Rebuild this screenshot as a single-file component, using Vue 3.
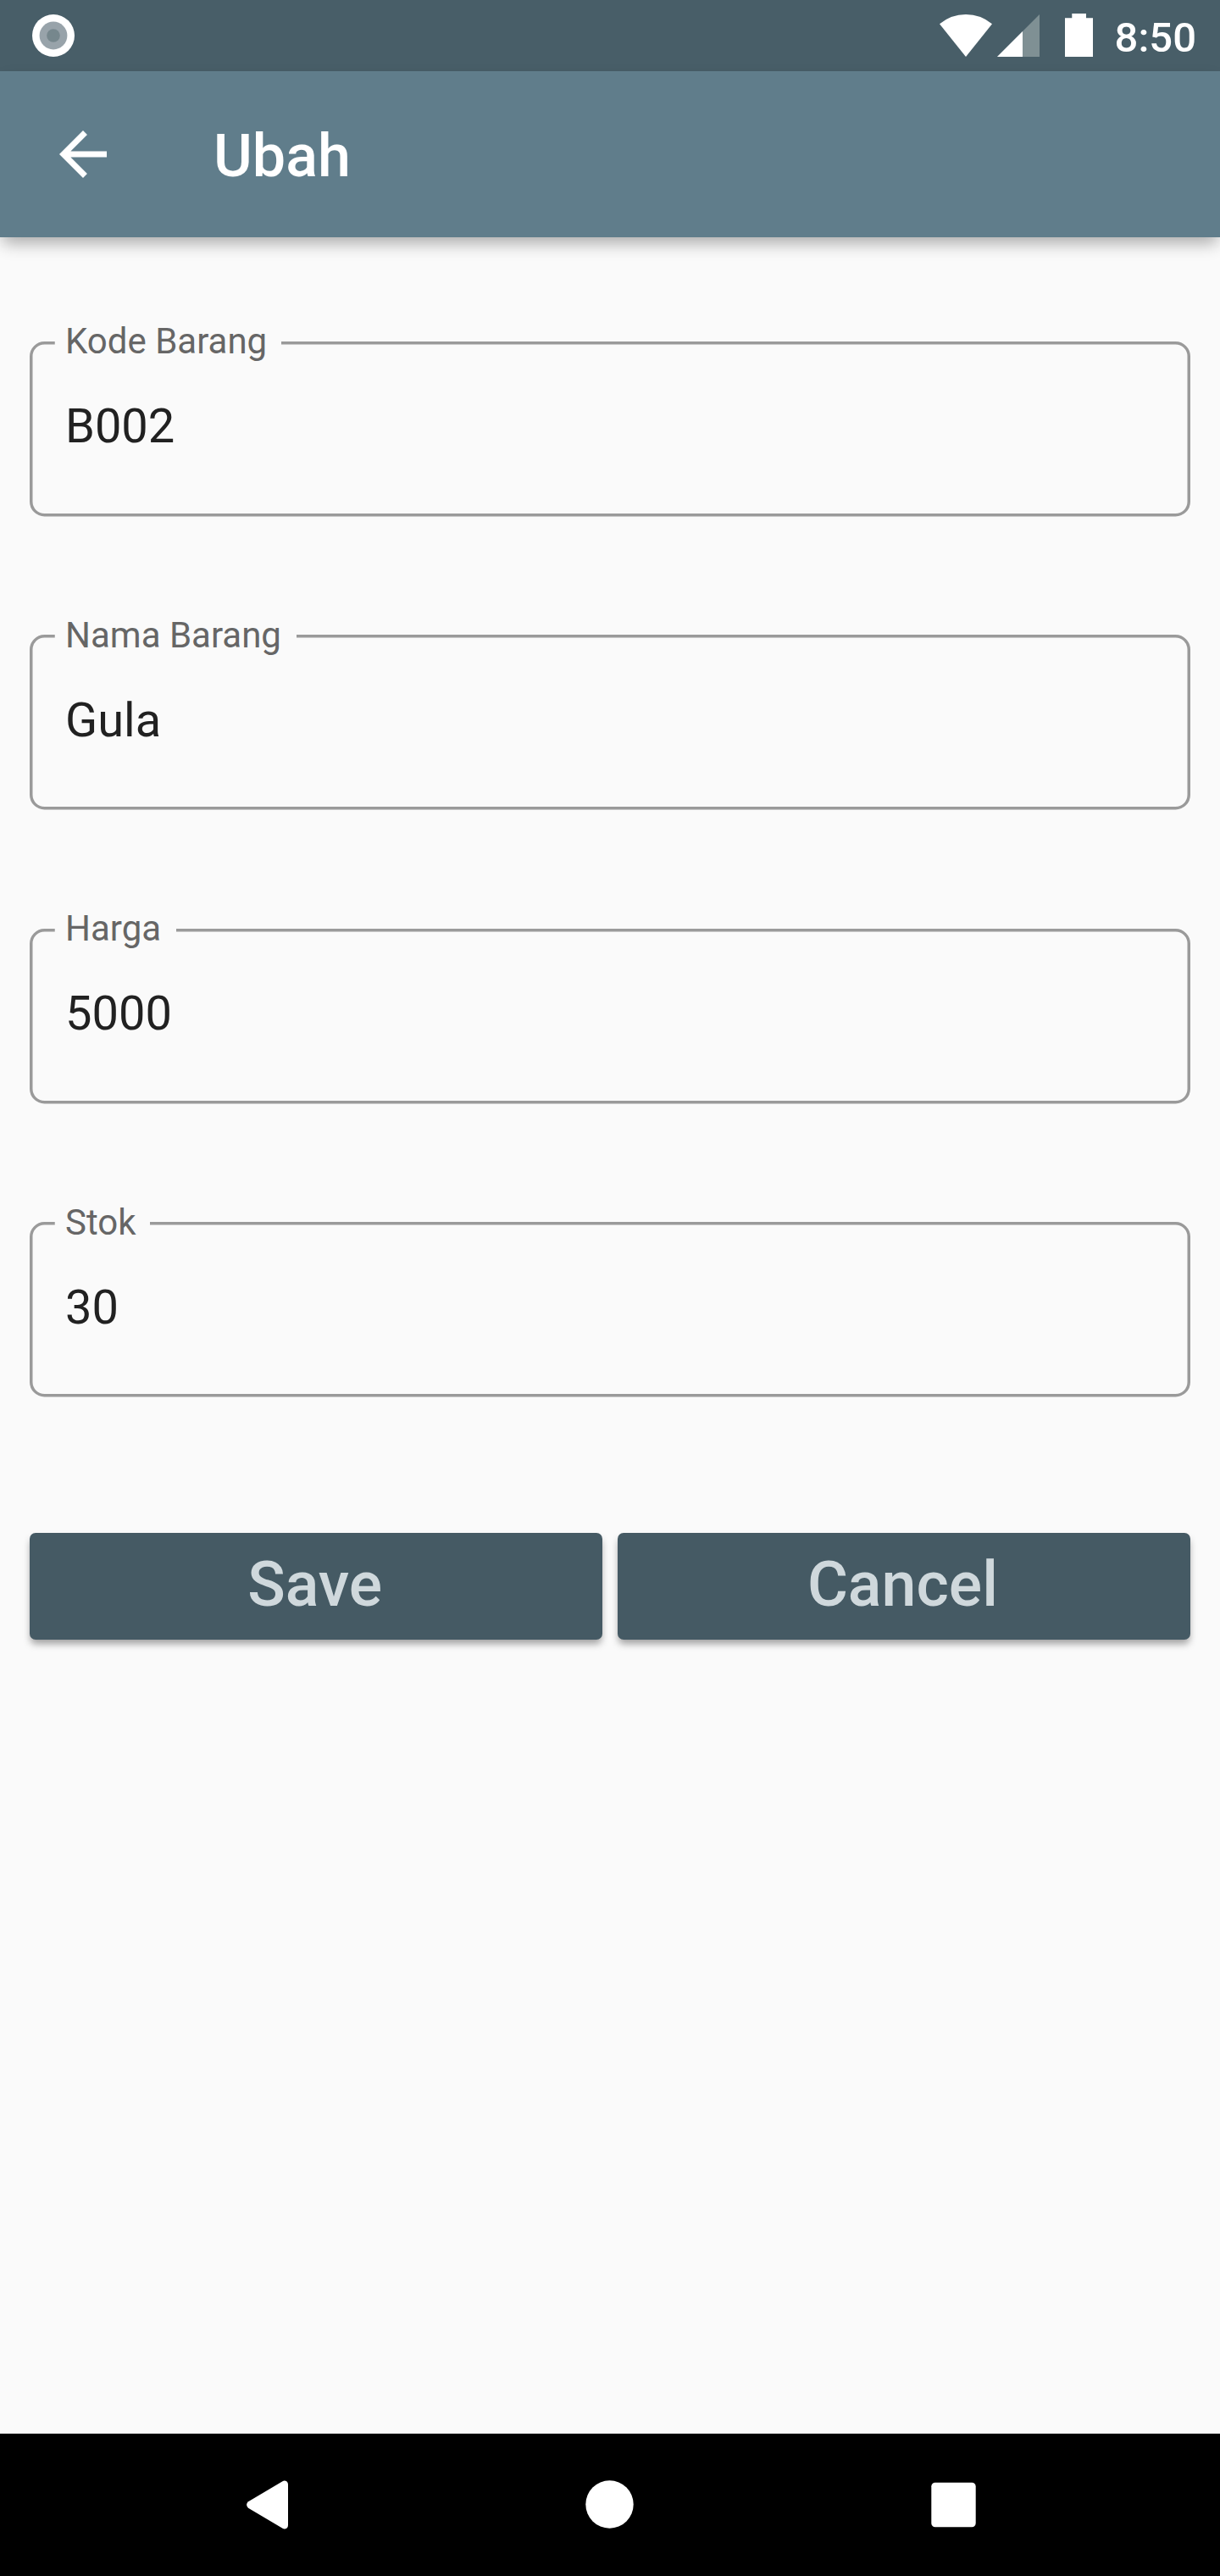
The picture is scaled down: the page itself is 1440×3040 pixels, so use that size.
<script setup>
import { ref } from 'vue'

const fields = ref([
  { label: 'Kode Barang', value: 'B002', notchEnd: 297 },
  { label: 'Nama Barang', value: 'Gula', notchEnd: 315 },
  { label: 'Harga', value: '5000', notchEnd: 173 },
  { label: 'Stok', value: '30', notchEnd: 142 },
])

// Rounded outline that leaves a gap in the top edge for the label
const outline = (end) =>
  `M${end} 1.75H1352.5A15.75 15.75 0 0 1 1368.25 17.5V189A15.75 15.75 0 0 1 1352.5 204.75H17.5A15.75 15.75 0 0 1 1.75 189V17.5A15.75 15.75 0 0 1 17.5 1.75H29.75`
</script>

<template>
  <div class="screen">
    <div class="status">
      <svg width="50" height="50" viewBox="0 0 50 50">
        <circle cx="25" cy="25" r="25" fill="#fff" />
        <circle cx="25" cy="25" r="16.4" fill="#98a3aa" />
        <circle cx="25" cy="25" r="7.8" fill="#76878d" />
      </svg>
      <div class="status-right">
        <svg width="182" height="52" viewBox="0 0 182 52">
          <path d="M0 12.3Q13.500 1 31 1T62 12.300L31 51Z" fill="#fff" />
          <path d="M118 1V51H68Z" fill="#7f9094" />
          <path d="M98 21V51H68Z" fill="#fff" />
          <path d="M156.300 0H173V5.200H181V51H148V5.200H156.300Z" fill="#fff" />
        </svg>
        <span class="time">8:50</span>
      </div>
    </div>
    <header class="appbar">
      <svg class="back" width="84" height="84" viewBox="0 0 24 24">
        <path d="M20 11H7.830l5.590-5.590L12 4l-8 8 8 8 1.410-1.410L7.830 13H20v-2z" fill="#fff" />
      </svg>
      <h1>Ubah</h1>
    </header>
    <main>
      <div class="fields">
        <label v-for="f in fields" :key="f.label" class="field">
          <svg class="outline" width="1370" height="207" viewBox="0 0 1370 207">
            <path :d="outline(f.notchEnd)" fill="none" stroke="#9a9a9a" stroke-width="3.5" />
          </svg>
          <span class="text">
            <span class="label">{{ f.label }}</span>
            <span class="value">{{ f.value }}</span>
          </span>
        </label>
      </div>
      <div class="actions">
        <button type="button">Save</button>
        <button type="button">Cancel</button>
      </div>
    </main>
    <nav>
      <svg width="50" height="58" viewBox="0 0 50 58">
        <path d="M2 25.300L42.500 1.200Q45 -.200 47.600 1.500Q49 2.500 49 5V53Q49 55.500 47.600 56.500Q45 58.200 42.500 56.800L2 32.700Q-1.800 29 2 25.300Z" fill="#fff" />
      </svg>
      <svg width="58" height="58" viewBox="0 0 58 58">
        <circle cx="28.500" cy="28.500" r="28.200" fill="#fff" />
      </svg>
      <svg width="54" height="54" viewBox="0 0 54 54">
        <rect x=".3" y=".8" width="52.400" height="52.400" rx="4.500" fill="#fff" />
      </svg>
    </nav>
  </div>
</template>

<style>
body {
  margin: 0;
  background: #fafafa;
}
</style>

<style scoped>
.screen {
  width: 1440px;
  height: 3040px;
  display: flex;
  flex-direction: column;
  overflow: hidden;
  background: #fafafa;
  font-family: Roboto, "Liberation Sans", sans-serif;
}
svg {
  display: block;
  flex: none;
}
.status {
  height: 84px;
  box-sizing: border-box;
  padding: 0 28px 0 38px;
  display: flex;
  align-items: center;
  justify-content: space-between;
  background: #485e68;
}
.status-right {
  display: flex;
  align-items: center;
  gap: 25px;
}
.time {
  font-size: 49px;
  line-height: 58px;
  font-weight: 500;
  color: #fff;
  padding-top: 6px;
}
.appbar {
  height: 196px;
  display: flex;
  align-items: center;
  background: #607d8b;
  box-shadow: 0 10px 18px -3px rgba(0, 0, 0, 0.32);
}
.back {
  margin-left: 56px;
}
h1 {
  margin: 0 0 0 112px;
  padding-top: 4px;
  font-size: 70px;
  line-height: 82px;
  font-weight: 500;
  color: #fff;
}
main {
  flex: 1;
  padding: 123px 35px 0;
}
.fields {
  display: grid;
  gap: 140px;
}
.field {
  display: grid;
  height: 206.5px;
}
.outline,
.text {
  grid-area: 1 / 1;
}
.outline {
  margin-top: -0.1px;
}
.text {
  display: flex;
  flex-direction: column;
  padding-left: 42px;
}
.label {
  margin-top: -25px;
  font-size: 42px;
  line-height: 50px;
  color: #666;
}
.value {
  margin-top: 42px;
  font-size: 56px;
  line-height: 66px;
  color: #212121;
}
.actions {
  display: flex;
  gap: 17.5px;
  margin-top: 160.4px;
}
button {
  flex: 1;
  height: 126px;
  box-sizing: border-box;
  padding: 0 3px 3px 0;
  border: 0;
  border-radius: 7px;
  background: #455a64;
  color: #cfd8dc;
  font: 500 73.5px/123px Roboto, "Liberation Sans", sans-serif;
  box-shadow: 0 6px 9px -1px rgba(0, 0, 0, 0.36);
}
nav {
  height: 168px;
  box-sizing: border-box;
  padding: 0 287px 0 291px;
  display: flex;
  align-items: center;
  justify-content: space-between;
  background: #000;
}
</style>
